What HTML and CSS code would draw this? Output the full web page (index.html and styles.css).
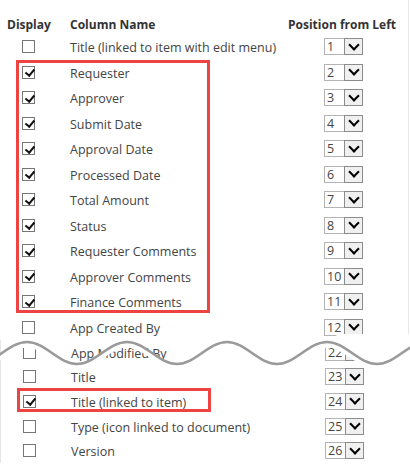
FILE: index.html
```html
<!DOCTYPE html>
<html>
<head>
<meta charset="utf-8">
<link rel="stylesheet" href="styles.css">
</head>
<body>
<div class="page">
  <div class="row head">
    <div class="c-disp">Display</div>
    <div class="c-name">Column Name</div>
    <div class="c-pos">Position from Left</div>
  </div>

  <div class="row"><span class="cb"></span><span class="name">Title (linked to item with edit menu)</span><span class="sel"><span class="num">1</span><span class="btn"></span></span></div>

  <div class="hl hl-a">
    <div class="row"><span class="cb on"></span><span class="name">Requester</span><span class="sel"><span class="num">2</span><span class="btn"></span></span></div>
    <div class="row"><span class="cb on"></span><span class="name">Approver</span><span class="sel"><span class="num">3</span><span class="btn"></span></span></div>
    <div class="row"><span class="cb on"></span><span class="name">Submit Date</span><span class="sel"><span class="num">4</span><span class="btn"></span></span></div>
    <div class="row"><span class="cb on"></span><span class="name">Approval Date</span><span class="sel"><span class="num">5</span><span class="btn"></span></span></div>
    <div class="row"><span class="cb on"></span><span class="name">Processed Date</span><span class="sel"><span class="num">6</span><span class="btn"></span></span></div>
    <div class="row"><span class="cb on"></span><span class="name">Total Amount</span><span class="sel"><span class="num">7</span><span class="btn"></span></span></div>
    <div class="row"><span class="cb on"></span><span class="name">Status</span><span class="sel"><span class="num">8</span><span class="btn"></span></span></div>
    <div class="row"><span class="cb on"></span><span class="name">Requester Comments</span><span class="sel"><span class="num">9</span><span class="btn"></span></span></div>
    <div class="row"><span class="cb on"></span><span class="name">Approver Comments</span><span class="sel"><span class="num">10</span><span class="btn"></span></span></div>
    <div class="row"><span class="cb on"></span><span class="name">Finance Comments</span><span class="sel"><span class="num">11</span><span class="btn"></span></span></div>
  </div>

  <div class="row"><span class="cb"></span><span class="name">App Created By</span><span class="sel"><span class="num">12</span><span class="btn"></span></span></div>

  <div class="lower">
    <div class="row low"><span class="cb"></span><span class="name">App Modified By</span><span class="sel"><span class="num">22</span><span class="btn"></span></span></div>
    <div class="row low"><span class="cb"></span><span class="name">Title</span><span class="sel"><span class="num">23</span><span class="btn"></span></span></div>
    <div class="hl hl-b">
      <div class="row low"><span class="cb on"></span><span class="name">Title (linked to item)</span><span class="sel"><span class="num">24</span><span class="btn"></span></span></div>
    </div>
    <div class="row low"><span class="cb"></span><span class="name">Type (icon linked to document)</span><span class="sel"><span class="num">25</span><span class="btn"></span></span></div>
    <div class="row low"><span class="cb"></span><span class="name">Version</span><span class="sel"><span class="num">26</span><span class="btn"></span></span></div>
  </div>

  <svg class="tear" width="410" height="50" viewBox="0 0 410 50">
    <path class="mask" d="M336 4 L410 4 L410 19 L400 23 L390 28 L380 33.5 L370 33 L360 28.3 L355 25 L350 21.6 L345 18.3 L338 14 Z"/>
    <path class="gap" d="M-23 37 C-4.8 37 8.8 15 27 15 S58.8 37 77 37 S108.8 15 127 15 S158.8 37 177 37 S208.8 15 227 15 S258.8 37 277 37 S308.8 15 327 15 S358.8 37 377 37 S408.8 15 427 15"/>
    <path class="line" d="M-23 34 C-4.8 34 8.8 12 27 12 S58.8 34 77 34 S108.8 12 127 12 S158.8 34 177 34 S208.8 12 227 12 S258.8 34 277 34 S308.8 12 327 12 S358.8 34 377 34 S408.8 12 427 12"/>
  </svg>
</div>
</body>
</html>
```

FILE: styles.css
```css
* { box-sizing: border-box; }
body {
  margin: 0;
  background: #fff;
  font-family: "Open Sans", "Noto Sans", sans-serif;
  font-size: 12.5px;
  color: #444;
}
.page {
  position: relative;
  width: 410px;
  height: 474px;
  overflow: hidden;
}
.row {
  display: grid;
  grid-template-columns: 70px 218px 112px;
  height: 25.5px;
  align-items: center;
}
.row.low { height: 24.6px; }
.head {
  height: 34px;
  align-items: end;
  font-size: 12px;
  font-weight: bold;
  color: #333;
  line-height: 18px;
}
.head .c-disp { padding-left: 7px; }
.name {
  white-space: nowrap;
  padding-top: 2px;
}
.cb {
  position: relative;
  width: 13px;
  height: 13px;
  margin-left: 22px;
  border: 1px solid #767676;
  background: #fff;
}
.cb.on::after {
  content: "";
  position: absolute;
  left: 3.5px;
  top: 0.5px;
  width: 3.5px;
  height: 7px;
  border: solid #111;
  border-width: 0 2px 2px 0;
  transform: rotate(40deg);
}
.sel {
  justify-self: center;
  display: flex;
  width: 39px;
  height: 17px;
  margin-left: -1px;
}
.sel .num {
  width: 20px;
  border: 1px solid #b4b4b4;
  border-right: none;
  padding-left: 2px;
  font-size: 12.5px;
  line-height: 15px;
  color: #444;
  background: #fff;
}
.sel .btn {
  position: relative;
  width: 19px;
  border: 1px solid #8c8c8c;
  background: #f0f0f0;
}
.sel .btn::after {
  content: "";
  position: absolute;
  left: 5px;
  top: 1.5px;
  width: 6px;
  height: 6px;
  border: solid #000;
  border-width: 0 2px 2px 0;
  transform: rotate(45deg);
}
.hl { position: relative; }
.hl::after {
  content: "";
  position: absolute;
  left: 16px;
  width: 188px;
  border: 3px solid #ee4343;
  pointer-events: none;
}
.hl-a::after { top: 0.5px; bottom: 1.5px; }
.hl-b::after { top: -1px; bottom: 2px; }
.lower {
  position: relative;
  border-left: 1px solid #e6e6e6;
}
.page::before {
  content: "";
  position: absolute;
  right: 1px;
  top: 0;
  height: 350px;
  border-right: 1px solid #e8e8e8;
}
.tear {
  position: absolute;
  left: 0;
  top: 330px;
  overflow: hidden;
}
.tear .mask { fill: #fff; }
.tear .gap { fill: none; stroke: #fff; stroke-width: 5; }
.tear .line { fill: none; stroke: #9a9a9a; stroke-width: 2.6; }
```
